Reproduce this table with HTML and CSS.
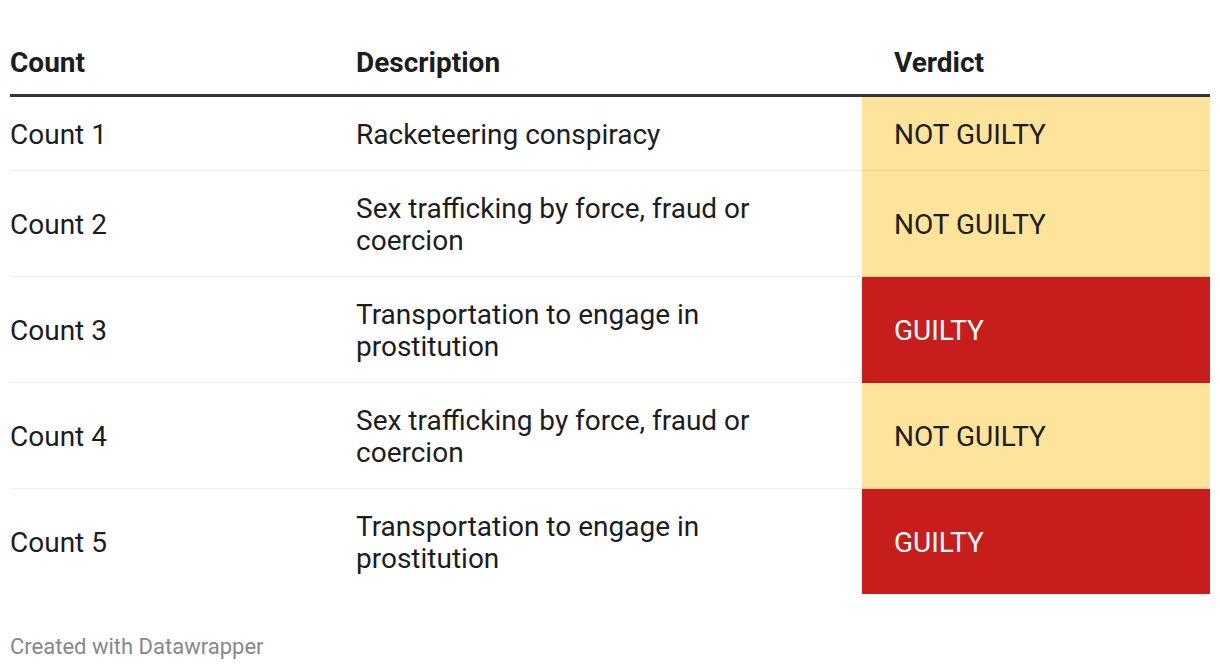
FILE: index.html
```html
<!DOCTYPE html>
<html>
<head>
<meta charset="utf-8">
<link rel="stylesheet" href="styles.css">
</head>
<body>
<div class="chart">
  <table class="verdicts">
    <colgroup>
      <col class="c-count">
      <col class="c-desc">
      <col class="c-verdict">
    </colgroup>
    <thead>
      <tr>
        <th class="h-count">Count</th>
        <th class="h-desc">Description</th>
        <th class="h-verdict">Verdict</th>
      </tr>
    </thead>
    <tbody>
      <tr>
        <td class="count">Count 1</td>
        <td class="desc">Racketeering conspiracy</td>
        <td class="verdict not-guilty">NOT GUILTY</td>
      </tr>
      <tr>
        <td class="count">Count 2</td>
        <td class="desc">Sex trafficking by force, fraud or<br>coercion</td>
        <td class="verdict not-guilty">NOT GUILTY</td>
      </tr>
      <tr>
        <td class="count">Count 3</td>
        <td class="desc">Transportation to engage in<br>prostitution</td>
        <td class="verdict guilty">GUILTY</td>
      </tr>
      <tr>
        <td class="count">Count 4</td>
        <td class="desc">Sex trafficking by force, fraud or<br>coercion</td>
        <td class="verdict not-guilty">NOT GUILTY</td>
      </tr>
      <tr>
        <td class="count">Count 5</td>
        <td class="desc">Transportation to engage in<br>prostitution</td>
        <td class="verdict guilty">GUILTY</td>
      </tr>
    </tbody>
  </table>
  <div class="footer">Created with Datawrapper</div>
</div>
</body>
</html>
```
FILE: styles.css
```css
html, body {
  margin: 0;
  padding: 0;
  background: #ffffff;
}
body {
  font-family: Roboto, "Liberation Sans", sans-serif;
  color: #1d1d1d;
}
.chart {
  padding: 47px 10px 0 10px;
}
.verdicts {
  width: 1200px;
  border-collapse: collapse;
  table-layout: fixed;
}
.c-count { width: 346px; }
.c-desc { width: 506px; }
.c-verdict { width: 348px; }
.verdicts th {
  text-align: left;
  font-weight: 700;
  font-size: 28px;
  line-height: 31.5px;
  padding: 0 0 15px 0;
  border-bottom: 3px solid #333333;
  color: #1d1d1d;
}
.verdicts th.h-verdict {
  padding-left: 32px;
}
.verdicts td {
  font-size: 28px;
  line-height: 31.5px;
  padding: 22px 0 20px 0;
  vertical-align: middle;
  border-bottom: 1px solid rgba(0, 0, 0, 0.07);
}
.verdicts tbody tr:last-child td {
  border-bottom: none;
}
.verdicts td.verdict {
  padding-left: 32px;
}
.not-guilty {
  background: #fee39b;
  color: #1d1d1d;
}
.guilty {
  background: #c71e1d;
  color: #ffffff;
}
.footer {
  margin-top: 40px;
  font-size: 22px;
  line-height: 26px;
  color: #888888;
}
```
